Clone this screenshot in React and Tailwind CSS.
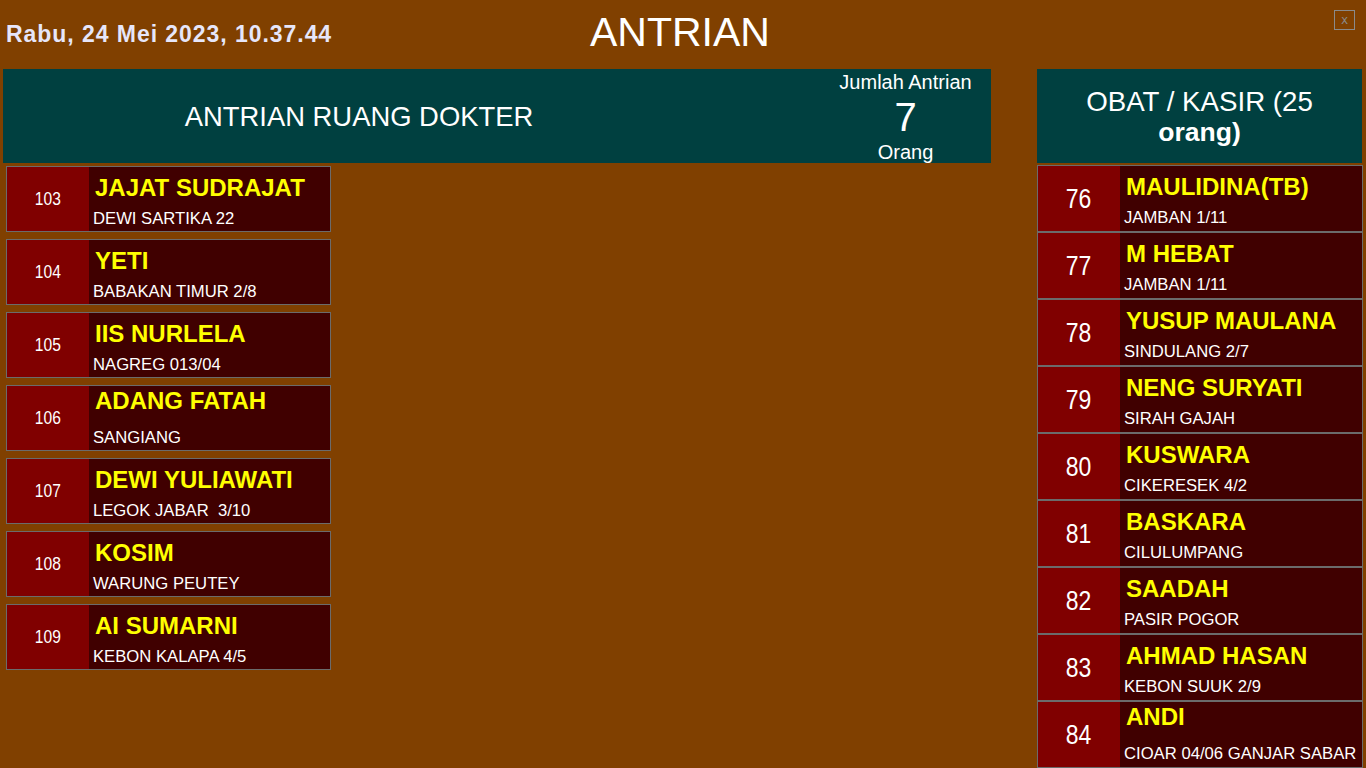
import React from "react";

const DOKTER = [
  { no: "103", nama: "JAJAT SUDRAJAT", alamat: "DEWI SARTIKA 22" },
  { no: "104", nama: "YETI", alamat: "BABAKAN TIMUR 2/8" },
  { no: "105", nama: "IIS NURLELA", alamat: "NAGREG 013/04" },
  { no: "106", nama: "ADANG FATAH", alamat: "SANGIANG", tinggi: true },
  { no: "107", nama: "DEWI YULIAWATI", alamat: "LEGOK JABAR  3/10" },
  { no: "108", nama: "KOSIM", alamat: "WARUNG PEUTEY" },
  { no: "109", nama: "AI SUMARNI", alamat: "KEBON KALAPA 4/5" },
];

const KASIR = [
  { no: "76", nama: "MAULIDINA(TB)", alamat: "JAMBAN 1/11" },
  { no: "77", nama: "M HEBAT", alamat: "JAMBAN 1/11" },
  { no: "78", nama: "YUSUP MAULANA", alamat: "SINDULANG 2/7" },
  { no: "79", nama: "NENG SURYATI", alamat: "SIRAH GAJAH" },
  { no: "80", nama: "KUSWARA", alamat: "CIKERESEK 4/2" },
  { no: "81", nama: "BASKARA", alamat: "CILULUMPANG" },
  { no: "82", nama: "SAADAH", alamat: "PASIR POGOR" },
  { no: "83", nama: "AHMAD HASAN", alamat: "KEBON SUUK 2/9" },
  { no: "84", nama: "ANDI", alamat: "CIOAR 04/06 GANJAR SABAR", tinggi: true },
];

function Pasien({ p, besar }) {
  return (
    <div
      className={`flex border border-[#6b6b6b] ${besar ? "h-[67px]" : "h-[66px]"}`}
    >
      <div className="w-[82px] shrink-0 bg-[#800000] flex items-center justify-center text-white">
        <span
          className={`inline-block scale-x-[0.82] ${
            besar ? "text-[28px]" : "text-[19px]"
          }`}
        >
          {p.no}
        </span>
      </div>
      <div className="flex-1 bg-[#400000] pl-[4px] overflow-hidden">
        <div
          className={`text-[#ffff00] font-bold text-[24px] leading-[28px] pl-[2px] whitespace-nowrap ${
            p.tinggi ? "mt-[1px]" : "mt-[7px]"
          }`}
        >
          {p.nama}
        </div>
        <div
          className={`text-white text-[16.67px] leading-[20px] whitespace-pre ${
            p.tinggi ? "mt-[13px]" : "mt-[7px]"
          }`}
        >
          {p.alamat}
        </div>
      </div>
    </div>
  );
}

export default function App() {
  return (
    <div className="w-[1366px] h-[768px] overflow-hidden bg-[#804000] font-['Liberation_Sans',Arial,sans-serif]">
      <div className="h-[69px] grid grid-cols-[1fr_auto_1fr]">
        <div className="pl-[6px] pt-[20px] text-[#e6e6fa] font-bold text-[23px] leading-[28px] tracking-[0.95px] whitespace-nowrap">
          Rabu, 24 Mei 2023, 10.37.44
        </div>
        <div className="pt-[8px] text-white text-[41px] leading-[48px] -ml-[6px]">
          ANTRIAN
        </div>
        <div className="flex justify-end pt-[10px] pr-[11px]">
          <button className="w-[21px] h-[20px] border border-[#8a8a8a] text-[#8a8a8a] text-[12px] leading-[16px] flex items-center justify-center font-['DejaVu_Sans_Mono',monospace]">
            x
          </button>
        </div>
      </div>

      <div className="flex">
        <div className="w-[988px] ml-[3px] flex flex-col">
          <div className="h-[94px] bg-[#004040] flex text-white">
            <div className="w-[712px] flex items-center justify-center text-[27.4px] pt-[2px]">
              ANTRIAN RUANG DOKTER
            </div>
            <div className="flex-1" />
            <div className="w-[171px] flex flex-col items-center">
              <div className="text-[20px] leading-[24px] pt-[1px]">Jumlah Antrian</div>
              <div className="text-[40px] leading-[46px]">7</div>
              <div className="text-[20px] leading-[22px] mt-[1px]">Orang</div>
            </div>
          </div>
          <div className="flex flex-col gap-[7px] mt-[3px] ml-[3px] w-[325px]">
            {DOKTER.map((p) => (
              <Pasien key={p.no} p={p} />
            ))}
          </div>
        </div>

        <div className="ml-[46px] w-[326px] flex flex-col">
          <div className="h-[94px] w-[325px] bg-[#004040] flex flex-col items-center justify-center pt-[2px] text-white text-[27.7px] leading-[30px]">
            <div>OBAT / KASIR (25</div>
            <div className="font-bold text-[26.5px]">orang)</div>
          </div>
          <div className="flex flex-col mt-[2px]">
            {KASIR.map((p) => (
              <Pasien key={p.no} p={p} besar />
            ))}
          </div>
        </div>
      </div>
    </div>
  );
}
